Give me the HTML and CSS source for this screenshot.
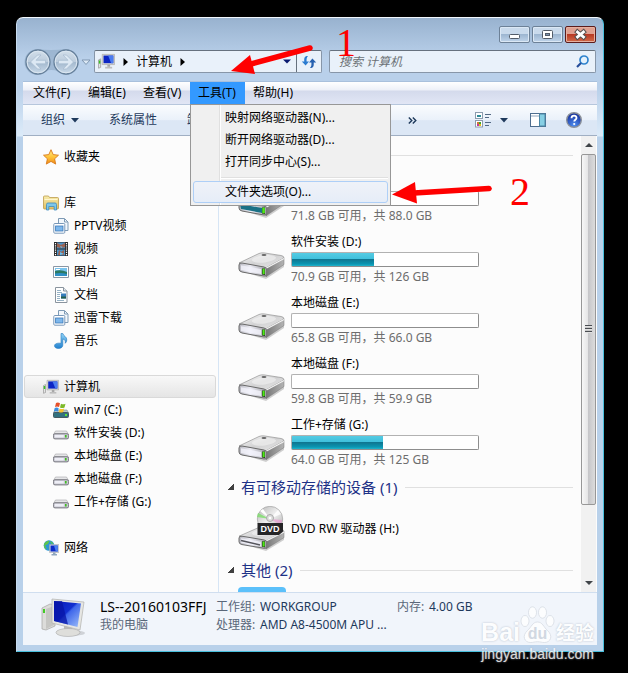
FILE: index.html
```html
<!DOCTYPE html>
<html lang="zh-CN">
<head>
<meta charset="utf-8">
<title>计算机</title>
<link rel="stylesheet" href="styles.css">
</head>
<body>
<svg class="defs" aria-hidden="true">
  <defs>
    <linearGradient id="gScreen" x1="0" y1="0" x2="1" y2="1"><stop offset="0" stop-color="#0818b8"/><stop offset=".45" stop-color="#1230d0"/><stop offset=".5" stop-color="#3e66ea"/><stop offset="1" stop-color="#9fc0fa"/></linearGradient>
    <linearGradient id="gTop" x1="0" y1="0" x2="1" y2="1"><stop offset="0" stop-color="#fafafa"/><stop offset=".5" stop-color="#d2d2d3"/><stop offset="1" stop-color="#e8e8e8"/></linearGradient>
    <linearGradient id="gFront" x1="0" y1="0" x2="1" y2="0"><stop offset="0" stop-color="#b4b4bc"/><stop offset=".4" stop-color="#ececf4"/><stop offset="1" stop-color="#a0a0a6"/></linearGradient>
    <linearGradient id="gSide" x1="0" y1="0" x2="1" y2="0"><stop offset="0" stop-color="#777"/><stop offset="1" stop-color="#b4b4b4"/></linearGradient>
    <linearGradient id="gStar" x1="0" y1="0" x2="0" y2="1"><stop offset="0" stop-color="#ffe98a"/><stop offset=".5" stop-color="#ffc53a"/><stop offset="1" stop-color="#f08a1a"/></linearGradient>
    <linearGradient id="gFolder" x1="0" y1="0" x2="0" y2="1"><stop offset="0" stop-color="#f8ecab"/><stop offset="1" stop-color="#e0bf62"/></linearGradient>
    <linearGradient id="gBlue" x1="0" y1="0" x2="0" y2="1"><stop offset="0" stop-color="#8fd2f6"/><stop offset="1" stop-color="#2382cf"/></linearGradient>
    <linearGradient id="gOrb" x1="0" y1="0" x2="0" y2="1"><stop offset="0" stop-color="#d3dfea"/><stop offset=".48" stop-color="#bdcddd"/><stop offset=".52" stop-color="#a5bacf"/><stop offset="1" stop-color="#c9daea"/></linearGradient>
    <radialGradient id="gHelp" cx=".5" cy=".85" r=".8"><stop offset="0" stop-color="#4f8ef0"/><stop offset="1" stop-color="#152f9c"/></radialGradient>
    <linearGradient id="gDisc" x1="0" y1="0" x2="1" y2="1"><stop offset="0" stop-color="#b5b5b5"/><stop offset=".5" stop-color="#f0f0f0"/><stop offset="1" stop-color="#a6a6a6"/></linearGradient>
    <symbol id="pc" viewBox="0 0 16 16">
      <path d="M.5 6.500l2-1v8l-2 .8z" fill="#e4e4e4" stroke="#8b8b8b" stroke-width=".6"/><path d="M.8 7h1.400v3H.8z" fill="#39c322"/>
      <path d="M4 1.300h11.600v9.600H4z" fill="#dcdcd8" stroke="#a3a3a0" stroke-width=".6"/><path d="M5.200 2.400h9.200v7.200H5.200z" fill="#0c25c4"/><path d="M9.500 2.400h4.900v7.200h-2z" fill="#4a7cf0"/>
      <path d="M8.800 11h2.600v2H8.800z" fill="#a8a8a8"/><path d="M6.700 13h6.600v1.600H6.700z" fill="#bdbdbd"/>
    </symbol>
    <symbol id="lib" viewBox="0 0 16 16">
      <path d="M5.500.5h6l3.500 3.500v8.500H5.500z" fill="#f2f7fc" stroke="#7e9ab5"/><path d="M11.500.8v3.200h3.200" fill="none" stroke="#7e9ab5"/>
      <rect x=".8" y="5.500" width="11" height="9.700" rx="1" fill="#fff" stroke="#7897b8"/><rect x="2.600" y="8" width="7.400" height="5" fill="#7db7ec" stroke="#3a78b9" stroke-width=".8"/>
    </symbol>
    <symbol id="disk" viewBox="0 0 16 16">
      <path d="M2.500 6h11l2 3.500H.5z" fill="#e6e6e8" stroke="#a4a4a8" stroke-width=".6"/><rect x=".4" y="8.700" width="15.200" height="5.200" rx="1.600" fill="#c7c7d0" stroke="#707078" stroke-width=".9"/>
      <path d="M1.800 10h9v2.500h-9z" fill="#eeeef6"/><path d="M12 10h1.600v2.600H12z" fill="#3fbf1e"/>
    </symbol>
    <symbol id="drive" viewBox="0 0 48 28">
      <path d="M3 19l25 8 18-12v-3z" fill="#000" opacity=".18"/>
      <path d="M1 11L21 1.500q2-.9 5-.6l17 2.600q3 .5 3 2.500L29 16.500z" fill="url(#gTop)" stroke="#909090" stroke-width=".7"/>
      <path d="M20 4.500c8-3 19-1 18 1.500s-13 6-20 4.500-4-4.500 2-6z" fill="#f5f5f5" opacity=".55"/>
      <path d="M1 13q0-2.500 3-2l22 4q3 .7 3 3v4q0 2.500-3 2L4 20q-3-.6-3-3z" fill="url(#gFront)" stroke="#686868"/>
      <path d="M3 13.200l20 3.800v5L3 18z" fill="#f4f4fc" opacity=".8"/>
      <path d="M28.500 15.500L46 6v6.500L28 24.800z" fill="url(#gSide)" stroke="#757575" stroke-width=".5"/><path d="M28.500 16L46 6.500" stroke="#f4f4f4" stroke-width="1.200"/>
      <path d="M24 16.500h3V23l-3-.6z" fill="#222"/><path d="M24.500 16.700h2.200v5.500h-2.200z" fill="#4de916"/><ellipse cx="26" cy="3" rx="2.500" ry=".9" fill="#666"/>
    </symbol>
  </defs>
</svg>

<main class="window">
  <header class="titlebar">
    <button class="cap" aria-label="最小化"><svg width="29" height="15" viewBox="0 0 29 15"><rect x="9.500" y="7.500" width="10" height="4" rx="1" fill="#fff" stroke="#525c69"/></svg></button>
    <button class="cap" aria-label="最大化"><svg width="29" height="15" viewBox="0 0 29 15"><rect x="9.500" y="3.500" width="10" height="8" rx="1" fill="#fff" stroke="#525c69"/><rect x="12.500" y="6.500" width="4" height="2" fill="#7d94b0" stroke="#525c69"/></svg></button>
    <button class="cap cap-close" aria-label="关闭"><svg width="29" height="15" viewBox="0 0 29 15"><path d="M11.500 5l6 5m0-5l-6 5" stroke="#54514f" stroke-width="4.800" stroke-linecap="square"/><path d="M11.500 5l6 5m0-5l-6 5" stroke="#fff" stroke-width="2.800" stroke-linecap="square"/></svg></button>
  </header>

  <div class="navrow">
    <svg class="travel" width="70" height="28" viewBox="0 0 70 28" role="img" aria-label="后退 前进">
      <path d="M14.500 1Q28 3 42.500 1a13 13 0 010 26Q28 17 14.500 27a13 13 0 010-26z" fill="#91abc6" opacity=".65"/>
      <circle cx="15" cy="14" r="12" fill="url(#gOrb)" stroke="#66809b" stroke-width="1.300"/><circle cx="43" cy="14" r="12" fill="url(#gOrb)" stroke="#66809b" stroke-width="1.300"/>
      <circle cx="15" cy="14" r="10.800" fill="none" stroke="#dce7f1"/><circle cx="43" cy="14" r="10.800" fill="none" stroke="#dce7f1"/>
      <path d="M7.500 14l7-7h3.500l-5 5.300h9.500v3.500H13l5 5.200h-3.500z" fill="#dce8f3" stroke="#a6bace" stroke-width=".7"/>
      <path d="M50.500 14l-7-7H40l5 5.300h-9.500v3.500H45L40 21h3.500z" fill="#dce8f3" stroke="#a6bace" stroke-width=".7"/>
      <path d="M59 12h8l-4 4.500z" fill="#dce9f5" stroke="#8199b3"/>
    </svg>
    <div class="address">
      <svg width="17" height="17"><use href="#pc"/></svg>
      <svg class="crumb" width="5" height="8" viewBox="0 0 5 8"><path d="M.5 0v8L5 4z"/></svg>
      <span>计算机</span>
      <svg class="crumb" width="5" height="8" viewBox="0 0 5 8"><path d="M.5 0v8L5 4z"/></svg>
      <svg class="drop" width="8" height="5" viewBox="0 0 8 5"><path d="M0 .5h8L4 4.500z" fill="#0a1a70"/></svg>
      <button class="refresh" aria-label="刷新"><svg width="16" height="16" viewBox="0 0 16 16"><path d="M7 2C3.500 1.800 3 4 3.300 7.500H.8L4.600 11.500 8 7.500H5.600C5.500 5 5.500 3.500 7 2z" fill="#2a7bd0"/><path d="M9 14c3.500.2 4-2 3.700-5.500h2.500L11.400 4.500 8 8.500h2.400C10.500 11 10.500 12.500 9 14z" fill="#2560b0"/></svg></button>
    </div>
    <label class="search">
      <input type="text" placeholder="搜索 计算机" aria-label="搜索 计算机">
      <svg width="13" height="13" viewBox="0 0 13 13"><circle cx="8" cy="5" r="4" fill="#e4f1fc" stroke="#2f83cd" stroke-width="1.700"/><path d="M5 8L1 12" stroke="#244c9a" stroke-width="2.200"/></svg>
    </label>
  </div>

  <nav class="menubar">
    <button>文件(F)</button><button>编辑(E)</button><button>查看(V)</button>
    <div class="menuhost">
      <button class="open">工具(T)</button>
      <div class="dropdown">
        <button>映射网络驱动器(N)...</button>
        <button>断开网络驱动器(D)...</button>
        <button>打开同步中心(S)...</button>
        <hr>
        <button class="hover">文件夹选项(O)...</button>
      </div>
    </div>
    <button>帮助(H)</button>
  </nav>

  <div class="toolbar">
    <button class="organize">组织 <svg width="8" height="5" viewBox="0 0 8 5"><path d="M0 0h8L4 4.500z" fill="#1e395b"/></svg></button>
    <button>系统属性</button>
    <button class="uninstall" aria-label="卸载或更改程序">卸</button>
    <button class="more" aria-label="更多命令"><svg width="9" height="7" viewBox="0 0 9 7"><path d="M.8.500l3 3-3 3M4.800.500l3 3-3 3" fill="none" stroke="#1e395b" stroke-width="1.400"/></svg></button>
    <button class="views" aria-label="更改视图"><svg width="16" height="16" viewBox="0 0 16 16"><rect x=".5" y=".5" width="7" height="6" fill="#fff" stroke="#8c9cae"/><path d="M2 3h4v2H2z" fill="#2e8c98"/><rect x=".5" y="8.500" width="7" height="6.500" fill="#fff" stroke="#8c9cae"/><path d="M2 10h2v2H2z" fill="#c73"/><path d="M4 10h2v2H4z" fill="#43a22f"/><path d="M2 12h2v2H2z" fill="#bd3a9e"/><path d="M4 12h2v2H4z" fill="#e4c01c"/><path d="M10 2.500h6M10 5.500h4M10 10.500h6M10 13.500h4" stroke="#536985"/></svg><svg width="8" height="5" viewBox="0 0 8 5"><path d="M0 0h8L4 4.500z" fill="#1e395b"/></svg></button>
    <button class="pane" aria-label="预览窗格"><svg width="16" height="14" viewBox="0 0 16 14"><rect x=".5" y=".5" width="15" height="13" fill="#fff" stroke="#4d6d8f"/><path d="M1 3h9" stroke="#8fa5bd"/><rect x="9.500" y="1" width="5.500" height="12" fill="#86cfe4" stroke="#4b87a6"/></svg></button>
    <button class="help" aria-label="帮助"><svg width="16" height="16" viewBox="0 0 16 16"><circle cx="8" cy="8" r="7.300" fill="url(#gHelp)" stroke="#8b9099" stroke-width="1.400"/><path d="M5.500 6.200C5.500 2.800 10.700 3 10.500 6c-.1 1.700-2.300 1.800-2.300 3.600" fill="none" stroke="#fff" stroke-width="1.800"/><circle cx="8.200" cy="12" r="1.100" fill="#fff"/></svg></button>
  </div>

  <div class="body">
    <nav class="tree">
      <a href="#"><svg width="16" height="16" viewBox="0 0 16 16"><path d="M8 .7l2.200 4.900 5.300.6-3.900 3.600 1.100 5.300L8 12.400l-4.700 2.700 1.100-5.300L.5 6.200l5.300-.6z" fill="url(#gStar)" stroke="#d87a1c" stroke-width=".9"/></svg>收藏夹</a>
      <a class="group" href="#"><svg width="16" height="16" viewBox="0 0 16 16"><path d="M.5 2q0-1 1-1h4l1 1.500h8q1 0 1 1V13q0 1-1 1h-13q-1 0-1-1z" fill="url(#gFolder)" stroke="#bd9c4c" stroke-width=".8"/><path d="M1.500 4.500h13" stroke="#fff6cf"/><path d="M3.500 15V9.500q0-1.500 1.500-1.500h7q1.500 0 1.500 1.500V15h-2.300v-3.500H5.800V15z" fill="#7cc6ea" stroke="#3c8cbf" stroke-width=".8"/></svg>库</a>
      <a class="child" href="#"><svg width="16" height="16"><use href="#lib"/></svg>PPTV视频</a>
      <a class="child" href="#"><svg width="16" height="16" viewBox="0 0 16 16"><path d="M1 1h14v14H1z" fill="#2a2a2c"/><path d="M4 1.500h8v6H4zM4 8.500h8v6H4z" fill="#4b93c8"/><path d="M4 2l4 2 4-2v4L9 7H7L4 6zM6 9l2 2 3-2v5H5z" fill="#9c6250"/><path d="M7 5l3 1-2 1zM7 11l4 2-4 1z" fill="#63bff0"/><path d="M2.500 2v13M13.500 2v13" stroke="#fff" stroke-width="1.200" stroke-dasharray="1.200 1"/></svg>视频</a>
      <a class="child" href="#"><svg width="16" height="16" viewBox="0 0 16 16"><path d="M.5 2.500h15v11H.5z" fill="#fff" stroke="#8a97a5"/><path d="M2 4h12v8H2z" fill="#7ac4ee"/><path d="M2 7q6-2 12 1v4H2z" fill="#2c7a63"/><path d="M2 9.500q6-1 12 .5v2H2z" fill="#2e8fc5"/><path d="M3 5h4v1H3z" fill="#fff"/></svg>图片</a>
      <a class="child" href="#"><svg width="16" height="16" viewBox="0 0 16 16"><path d="M2.500.5h8l3.500 3.500v11.500H2.500z" fill="#fff" stroke="#8a949e"/><path d="M10.500.5V4H14" fill="#e3e9ef" stroke="#8a949e"/><path d="M4 3.500h4M4 5.500h5M4 7.500h3M4 9.500h3M4 11.500h3M4 13.500h7" stroke="#7c9fb8" stroke-width=".8"/><path d="M8 6.500h5v5H8z" fill="#377dbb"/><path d="M8 9.500h5v2H8z" fill="#245e4c"/></svg>文档</a>
      <a class="child" href="#"><svg width="16" height="16"><use href="#lib"/></svg>迅雷下载</a>
      <a class="child" href="#"><svg width="16" height="16" viewBox="0 0 16 16"><path d="M8 .5h1.800c.4 2.500 4.200 3 4 6.500-.1 1.600-.8 2.500-1.600 3.300.5-2.400-.5-4-2.400-4.400v6.300c0 2-1.900 3.300-4.400 3.300-2.200 0-3.900-1-3.900-2.700C1.500 11 3.700 9.700 8 10.300z" fill="url(#gBlue)" stroke="#2379bd" stroke-width=".6"/></svg>音乐</a>
      <a class="group selected" href="#"><svg width="16" height="16"><use href="#pc"/></svg>计算机</a>
      <a class="child" href="#"><svg width="16" height="16" viewBox="0 0 16 16"><path d="M2 8h12l1.500 3H.5z" fill="#b8c8cc" stroke="#68787c" stroke-width=".5"/><rect x=".5" y="10.500" width="15" height="5" rx="1" fill="#32717f" stroke="#455a62"/><path d="M12 12h2v2h-2z" fill="#5be034"/><path d="M3 1q2-1 4 .3L6 5Q4 4 2 5z" fill="#e6502a"/><path d="M8 1.700q2 1 4.500 0L11.500 5.500q-2.500 1-4.500 0z" fill="#7cb928"/><path d="M1.700 6q2-1 4 .2L4.800 9.500Q3 8.500.8 9.500z" fill="#3b8de0"/><path d="M6.700 6.500q2 1 4.500 0l-1 3.500q-2.400 1-4.400 0z" fill="#f8c32b"/></svg>win7 (C:)</a>
      <a class="child" href="#"><svg width="16" height="16"><use href="#disk"/></svg>软件安装 (D:)</a>
      <a class="child" href="#"><svg width="16" height="16"><use href="#disk"/></svg>本地磁盘 (E:)</a>
      <a class="child" href="#"><svg width="16" height="16"><use href="#disk"/></svg>本地磁盘 (F:)</a>
      <a class="child" href="#"><svg width="16" height="16"><use href="#disk"/></svg>工作+存储 (G:)</a>
      <a class="group" href="#"><svg width="16" height="16" viewBox="0 0 16 16"><circle cx="6" cy="5.500" r="5.300" fill="#2b96d6"/><path d="M2 2.500Q5 0 6.500 1L5 4l-3 1.500L3.500 8 3 9.500Q.5 7.500.8 5zM7 1q3 1 3.500 3L8 3.500z" fill="#5ec44a"/><path d="M6.500 4.500h9.300v8H6.500z" fill="#dedfe3" stroke="#9a9ca3" stroke-width=".5"/><path d="M7.500 5.500h7.300v6H7.500z" fill="#0d2bc8"/><path d="M11 5.500h3.800v6h-2z" fill="#4c80ef"/><path d="M10 12.500h2.500v1.500h1.500v1.500h-5.500V14H10z" fill="#8fa6be"/></svg>网络</a>
    </nav>

    <section class="files">
      <h2 class="first" aria-label="硬盘"></h2>
      <div class="drive"><svg width="48" height="28" viewBox="0 0 48 28"><use href="#drive"/><path d="M2 13l22 4v5L3 18z" fill="#1a7186"/><path d="M24.500 16.700h2.200v5.500h-2.200z" fill="#4de916"/></svg>
        <div class="info"><p></p><div class="bar"><span style="width:18%"></span></div><small>71.8 GB 可用，共 88.0 GB</small></div></div>
      <div class="drive"><svg width="48" height="28"><use href="#drive"/></svg>
        <div class="info"><p>软件安装 (D:)</p><div class="bar"><span style="width:44%"></span></div><small>70.9 GB 可用，共 126 GB</small></div></div>
      <div class="drive"><svg width="48" height="28"><use href="#drive"/></svg>
        <div class="info"><p>本地磁盘 (E:)</p><div class="bar"></div><small>65.8 GB 可用，共 66.0 GB</small></div></div>
      <div class="drive"><svg width="48" height="28"><use href="#drive"/></svg>
        <div class="info"><p>本地磁盘 (F:)</p><div class="bar"></div><small>59.8 GB 可用，共 59.9 GB</small></div></div>
      <div class="drive"><svg width="48" height="28"><use href="#drive"/></svg>
        <div class="info"><p>工作+存储 (G:)</p><div class="bar"><span style="width:49%"></span></div><small>64.0 GB 可用，共 125 GB</small></div></div>
      <h2><i class="tri"></i>有可移动存储的设备 (1)</h2>
      <div class="drive dvd"><svg width="48" height="46" viewBox="0 0 48 46"><svg y="20" width="48" height="26" viewBox="0 0 48 28" preserveAspectRatio="none"><use href="#drive"/></svg><path d="M3 34.500l19 4.500" stroke="#55555c" stroke-width="1.500"/><circle cx="32" cy="13" r="12.700" fill="url(#gDisc)" stroke="#999" stroke-width=".6"/><path d="M32 13L20 7l-1 4z" fill="#7ddf6a" opacity=".8"/><path d="M32 13L22 5l3-2z" fill="#fff"/><path d="M32 13l12 1-1 5z" fill="#e79bd0" opacity=".7"/><path d="M32 13l8-9 3 4z" fill="#fff" opacity=".8"/><circle cx="32" cy="12" r="3.500" fill="#ddd" stroke="#aaa"/><circle cx="32" cy="12" r="1.300" fill="#fff"/><path d="M19.500 17h25.500v8.500L41 29H19.500z" fill="#252527"/><text class="dvdtext" x="32" y="26" text-anchor="middle">DVD</text></svg>
        <p>DVD RW 驱动器 (H:)</p></div>
      <h2><i class="tri"></i>其他 (2)</h2>
      <div class="tile"></div>
    </section>

    <div class="scroll">
      <span class="sbtn"><svg width="8" height="4" viewBox="0 0 8 4"><path d="M0 4h8L4 0z" fill="#404448"/></svg></span>
      <span class="thumb"><i></i></span>
      <span></span>
      <span class="sbtn"><svg width="8" height="4" viewBox="0 0 8 4"><path d="M0 0h8L4 4z" fill="#404448"/></svg></span>
    </div>
  </div>

  <footer class="status">
    <svg width="44" height="40" viewBox="0 0 44 40"><ellipse cx="30" cy="35" rx="14" ry="3" fill="#000" opacity=".14"/><path d="M1 10l8-4 5 1v21L5 32l-4-1z" fill="#dcdcda" stroke="#a5a5a2" stroke-width=".7"/><path d="M5 11l8-3v19l-8 4z" fill="#c6c6c3"/><path d="M2 11h2v4H2z" fill="#43cb28"/><path d="M23 27h8l1 6h-9z" fill="#b9b9b6"/><ellipse cx="27" cy="34.500" rx="12" ry="4" fill="#dededb" stroke="#aaa" stroke-width=".6"/><path d="M11 1l32 3-4 28-28-7z" fill="#e6e6e3" stroke="#b0b0ad" stroke-width=".7"/><path d="M13 3l27 2.500-3.500 23.500L13 23z" fill="url(#gScreen)"/><path d="M13 3h8l6 23.500L13 23z" fill="#0714a6" opacity=".75"/></svg>
    <div class="who"><strong>LS--20160103FFJ</strong><span>我的电脑</span></div>
    <dl class="spec"><dt>工作组:</dt><dd>WORKGROUP</dd><dt>处理器:</dt><dd>AMD A8-4500M APU ...</dd></dl>
    <dl class="mem"><dt>内存:</dt><dd>4.00 GB</dd></dl>
  </footer>
</main>

<svg class="arrow arrow-one" width="86" height="32" viewBox="0 0 86 32" aria-hidden="true"><path d="M20 19L79 3" stroke="#f00" stroke-width="5.500" stroke-linecap="round"/><path d="M0 26L19 10l5 19z" fill="#f00"/></svg>
<span class="num num-one">1</span>
<svg class="arrow arrow-two" width="104" height="26" viewBox="0 0 104 26" aria-hidden="true"><path d="M22 13L97 8.500" stroke="#f00" stroke-width="5.500" stroke-linecap="round"/><path d="M0 14.500L23 2l2 21.500z" fill="#f00"/></svg>
<span class="num num-two">2</span>

<div class="mark">
  <div class="logo"><b>Bai</b><svg width="36" height="38" viewBox="0 0 36 38"><g fill="#fff" stroke="#cfd4dc" stroke-width=".7"><ellipse cx="5" cy="15" rx="4" ry="5.500"/><ellipse cx="12.500" cy="6.500" rx="4" ry="5.700"/><ellipse cx="22.500" cy="6.500" rx="4" ry="5.700"/><ellipse cx="30" cy="15" rx="4" ry="5.500"/><path d="M17.500 16c5 0 6 5 10 8.500 6 5.500 3 12-3 12-3 0-4-.8-7-.8s-4 .8-7 .8c-6 0-9-6.500-3-12 4-3.500 5-8.500 10-8.500z"/></g><text class="du" x="17.500" y="33" text-anchor="middle">du</text></svg><b class="jy">经验</b></div>
  <div class="url">jingyan.baidu.com</div>
</div>
</body>
</html>
```
FILE: styles.css
```css
* { box-sizing: border-box; }
body {
  margin: 0;
  padding: 17px 24px 21px 16px;
  height: 100vh;
  position: relative;
  overflow: hidden;
  background: #000;
  color: #000;
  font: 12px/18px "Noto Sans", "Noto Sans CJK SC", sans-serif;
}
.defs { position: absolute; width: 0; height: 0; }
svg { display: block; flex: none; }
button { font: inherit; color: inherit; border: 0; background: none; padding: 0; margin: 0; white-space: nowrap; }
p, h2, dl, dd { margin: 0; }

.window {
  display: flex;
  flex-direction: column;
  height: 100%;
  padding: 0 6px 6px;
  border: 1px solid #49bfdc;
  border-top-color: #f2f8fd;
  border-left-color: #c8dcf0;
  border-radius: 7px 7px 0 0;
  background: linear-gradient(#98b2cf 0, #b9d0ea 40px, #b9d0ea 70px, #dcebf9 118px, #b9d1ea 119px);
}

.titlebar { display: flex; justify-content: flex-end; gap: 2px; height: 32px; padding: 8px 1px 0 0; flex: none; }
.cap {
  width: 31px;
  height: 17px;
  border: 1px solid #6d8197;
  border-radius: 2px;
  box-shadow: inset 0 0 0 1px #dbe8f5;
  background: linear-gradient(#c9daec 45%, #9db6d1 50%, #bfd4ea);
}
.cap-close { border-color: #5c1c1c; box-shadow: inset 0 0 0 1px #e6b0a0; background: linear-gradient(#dfa091 45%, #b83a24 50%, #d26b4a); }

.navrow { display: flex; align-items: center; flex: none; height: 23px; margin-bottom: 8px; padding-right: 1px; }
.travel { margin-right: 1px; }
.address, .search { display: flex; align-items: center; height: 23px; border: 1px solid #8796a8; border-top-color: #66717e; border-radius: 2px; background: #e9f1fa; }
.address { flex: 1 1 228px; min-width: 0; padding-left: 3px; }
.crumb { margin: 0 8px; }
.drop { margin: 0 5px 0 auto; }
.refresh { display: flex; align-items: center; justify-content: center; width: 25px; height: 21px; border-left: 1px solid #66717e; }
.search { flex: 1 1 267px; min-width: 0; margin-left: 7px; padding: 0 6px 0 9px; }
.search input { flex: 1; min-width: 0; padding: 0; border: 0; outline: 0; background: none; font: inherit; font-style: italic; }
.search input::placeholder { color: #6c7176; opacity: 1; }

.menubar { display: flex; flex: none; height: 23px; padding-left: 2px; border-top: 1px solid #a9c0dc; background: linear-gradient(#fff 0, #edf0f8 8px, #d4daec 9px, #e1e6f5); }
.menubar > button, .menuhost > button { width: 55px; height: 22px; padding-left: 8px; text-align: left; }
.menuhost { position: relative; }
.menuhost > .open { background: #3399ff; }
.dropdown {
  position: absolute;
  z-index: 2;
  top: 22px;
  left: 0;
  width: 201px;
  padding: 2px;
  border: 1px solid #979797;
  background: linear-gradient(90deg, #f0f0f0 28px, #e0e0e0 28px, #e0e0e0 29px, #fff 29px, #fff 30px, #f0f0f0 30px);
}
.dropdown button { display: block; width: 100%; height: 22px; padding: 0 0 0 32px; text-align: left; }
.dropdown hr { height: 2px; margin: 4px 0 2px 28px; border: 0; border-top: 1px solid #e0e0e0; background: #fff; }
.dropdown .hover { border: 1px solid #aecff7; border-radius: 3px; padding-left: 31px; line-height: 20px; background: linear-gradient(#eff2f8, #e6edf8); }

.toolbar { display: flex; align-items: center; flex: none; height: 32px; padding: 0 15px 0 18px; border-top: 1px solid #b6c6dc; border-bottom: 1px solid #a0afc3; color: #1e395b; background: linear-gradient(#fafcfe, #eaf1fa 50%, #dce7f5 52%, #dce7f5); }
.toolbar button { display: flex; align-items: center; gap: 6px; margin-right: 30px; }
.toolbar .uninstall { flex: 0 1 191px; min-width: 0; overflow: hidden; }
.toolbar .more { margin: 0 auto 0 0; }
.toolbar .views { gap: 9px; margin-right: 22px; }
.toolbar .pane { margin-right: 20px; }
.toolbar .help { margin-right: 0; }

.body { display: flex; flex: 1; min-height: 0; overflow: hidden; background: #fcfcfc; }
.tree { flex: none; width: 196px; padding: 9px 2px 0 1px; border-right: 1px solid #d6e5f5; }
.tree a { display: flex; align-items: center; gap: 5px; height: 23px; padding-left: 19px; color: #000; text-decoration: none; }
.tree .child { padding-left: 29px; }
.tree .group { margin-top: 23px; }
.tree .selected { padding-left: 18px; border: 1px solid #d9d9d9; border-radius: 3px; background: linear-gradient(#f8f8f8, #e5e5e5); }

.files { flex: 1; min-width: 0; padding: 8px 8px 0; }
.files h2 { display: flex; align-items: center; height: 22px; color: #1e3287; font-size: 15px; font-weight: 400; }
.files h2::after { content: ""; flex: 1; height: 1px; margin-left: 8px; background: #e0e0e0; }
.files .first { margin-bottom: 5px; }
.tri { width: 6px; height: 6px; margin: 0 7px 0 1px; background: linear-gradient(135deg, transparent 45%, #404040 50%); }
.drive { display: flex; height: 61px; padding-left: 11px; gap: 5px; }
.drive > svg { margin-top: 20px; }
.info { flex: 0 1 188px; min-width: 0; }
.info p { height: 20px; line-height: 20px; }
.bar { height: 15px; margin-bottom: 1px; border: 1px solid #b2b2b2; border-right-color: #8e8e8e; border-bottom-color: #8e8e8e; border-radius: 2px; background: #fff; }
.bar span { display: block; height: 100%; background: linear-gradient(#55cbe3, #3fc0dc 45%, #0f7691 50%, #0a96b2 85%, #22b4cc); }
.info small { display: block; font-size: 12px; color: #6d6d6d; white-space: nowrap; }
.dvd { align-items: center; }
.dvd > svg { margin: 0; }
.dvdtext { font: bold 9px "Liberation Sans", sans-serif; fill: #fff; }
.tile { width: 48px; height: 48px; margin: 6px 0 0 11px; border-radius: 4px; background: #5bc0fa; }

.scroll { display: grid; grid-template-rows: 18px 5fr 1fr 17px; flex: none; width: 16px; background: #f1f1f1; border-right: 1px solid #fcfcfc; }
.sbtn { display: flex; align-items: center; justify-content: center; }
.thumb { display: flex; align-items: center; justify-content: center; border: 1px solid #979797; border-radius: 2px; background: linear-gradient(90deg, #f7f7f7, #e5e5e6 45%, #c6c6c9 50%, #dcdcdc); }
.thumb i { width: 7px; height: 8px; background: repeating-linear-gradient(#4a4d52 0, #4a4d52 1px, #eee 1px, #bbb 3px); }

.status { display: flex; flex: none; height: 53px; padding: 5px 0 0 18px; border-top: 1px solid #d0deef; color: #1e395b; background: #f1f5fb; white-space: nowrap; }
.who { width: 116px; margin-left: 15px; }
.who strong { display: block; color: #000; font-size: 14px; font-weight: 400; }
.who span, .status dt { display: block; color: #5a6779; }
.spec { display: grid; grid-template-columns: 44px 1fr; grid-auto-rows: 18px; width: 181px; }
.mem { display: grid; grid-template-columns: 32px 1fr; grid-auto-rows: 18px; }

.arrow { position: absolute; z-index: 5; }
.arrow-one { left: 231px; top: 45px; }
.arrow-two { left: 392px; top: 180px; }
.num { position: absolute; z-index: 5; color: #f00; font: 40px/40px "Liberation Serif", serif; }
.num-one { left: 336px; top: 23px; }
.num-two { left: 510px; top: 172px; }

.mark { position: absolute; z-index: 6; right: 34px; bottom: 9px; color: #fff; opacity: .85; text-shadow: 0 0 2px #aab3c0; }
.logo { display: flex; align-items: flex-end; height: 38px; }
.logo b { font: bold 25px/24px "Liberation Sans", sans-serif; }
.logo .jy { font: bold 19px/24px "Noto Sans CJK SC", sans-serif; }
.du { font: bold 16px "Liberation Sans", sans-serif; fill: #ccd3dd; text-shadow: none; }
.url { font: 14px/20px "Liberation Sans", sans-serif; text-align: right; }
```
